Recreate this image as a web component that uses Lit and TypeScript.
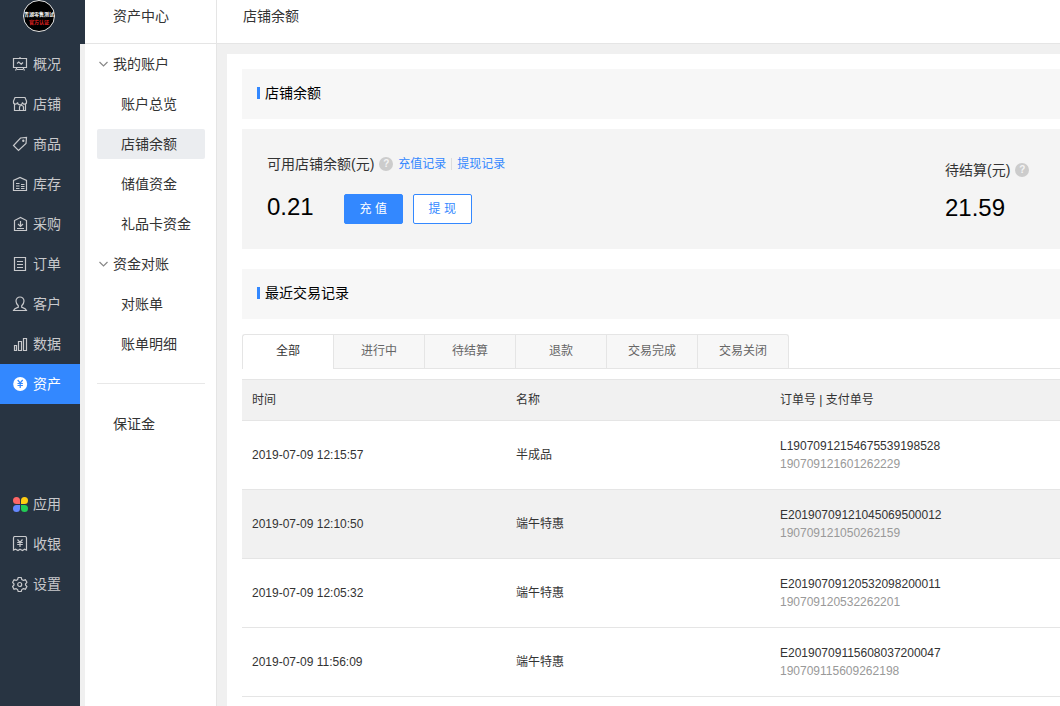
import { LitElement, html, svg, css } from "lit";
import { customElement, state } from "lit/decorators.js";
import { classMap } from "lit/directives/class-map.js";

const icons: Record<string, unknown> = {
  overview: svg`<path d="M1.500 2.500h13v9h-13zM8 1v1.500M5 11.500 3.500 14.500M11 11.500l1.500 3M5 13.500h6"/><path d="M5 7.500 6.800 6l2.400 2.200 1.800-1.700"/>`,
  shop: svg`<path d="M3 1.500h10l1.500 3.500v1a2 2 0 0 1-4 .3 2.500 2.500 0 0 1-5 0A2 2 0 0 1 1.500 6V5zM2.500 8v6.500h11V8"/><path d="M7.500 14.500v-3a2 2 0 0 1 4 0v3"/>`,
  goods: svg`<path d="M8.500 2 14.500 1.500 14 7.500 6.500 14.500 1.500 9.500z"/><circle cx="11.300" cy="4.800" r=".6"/>`,
  stock: svg`<path d="M1.500 14.500V4.500L8 1.500l6.500 3v10z"/><path d="M4 7.500h3.500M4 10h3.500M4 12.500h3.500M9 8.500h3.500M9 10.500h3.500M9 12.500h3.500"/>`,
  purchase: svg`<path d="M2.500 14.500v-10L8.500 1.500l6 3v10z"/><path d="M8.500 5v5M6 8l2.500 2.500L11 8M5 12.500h7"/>`,
  order: svg`<path d="M2.500 1.500h11v13h-11zM5 5.500h6M5 8.500h6M5 11.500h6"/>`,
  customer: svg`<path d="M8 1a4 4 0 0 0-4 4c0 2 .8 3.300 2.300 4.700v1.500c-2 .6-4 1-4.800 3.300h13c-.8-2.300-2.800-2.700-4.800-3.300V9.700C11.200 8.300 12 7 12 5a4 4 0 0 0-4-4z"/>`,
  data: svg`<path d="M2.500 9.500h2v5h-2zM6.500 5.500h3v9h-3zM11.500 2.500h3v12h-3z"/>`,
  asset: svg`<circle cx="8.200" cy="8" r="7" fill="#fff" stroke="none"/><path stroke="#3388ff" d="M5.700 4 8.200 7l2.500-3M5.500 7.500h5.400M5.500 9.500h5.400M8.200 7v5"/>`,
  apps: svg`<g stroke="none"><path fill="#ff6666" d="M8 8H4.500A3.500 3.500 0 1 1 8 4.500z"/><path fill="#ffcc11" d="M9 8V4.500A3.500 3.500 0 1 1 12.500 8z"/><path fill="#6688ff" d="M8 9v3.500A3.500 3.500 0 1 1 4.500 9z"/><path fill="#22cc55" d="M9 9h3.500A3.500 3.500 0 1 1 9 12.500z"/></g>`,
  cashier: svg`<path d="M3 .5h10c1 0 1.500.5 1.500 1.500v12l-2-.800-2 1.300L8 13.200 6 14.500l-2.500-1.300-2 .8V2C1.500 1 2 .5 3 .5z"/><path d="M5.500 3.500 8 6.300l2.500-2.800M5.200 6.500h5.600M5.200 8.500h5.600M8 6.500V11"/>`,
  settings: svg`<path d="M6.200 1.500h3l.6 2 1.500.9 2.100-.6 1.500 2.500L13.500 8v1l1.400 1.600-1.500 2.600-2.100-.5-1.500.9-.6 1.900h-3l-.6-1.900-1.500-.9-2.100.5L.6 10.600 2 9V8L.6 6.300 2.100 3.800l2.100.6 1.400-.9z"/><circle cx="7.700" cy="8.500" r="2"/>`,
};

interface NavItem {
  icon: string;
  label: string;
}

const PRIMARY: NavItem[] = [
  { icon: "overview", label: "概况" },
  { icon: "shop", label: "店铺" },
  { icon: "goods", label: "商品" },
  { icon: "stock", label: "库存" },
  { icon: "purchase", label: "采购" },
  { icon: "order", label: "订单" },
  { icon: "customer", label: "客户" },
  { icon: "data", label: "数据" },
  { icon: "asset", label: "资产" },
];

const SECONDARY: NavItem[] = [
  { icon: "apps", label: "应用" },
  { icon: "cashier", label: "收银" },
  { icon: "settings", label: "设置" },
];

const GROUPS = [
  { title: "我的账户", items: ["账户总览", "店铺余额", "储值资金", "礼品卡资金"] },
  { title: "资金对账", items: ["对账单", "账单明细"] },
];

const TABS = ["全部", "进行中", "待结算", "退款", "交易完成", "交易关闭"];

const ROWS = [
  { time: "2019-07-09 12:15:57", name: "半成品", order: "L19070912154675539198528", pay: "190709121601262229" },
  { time: "2019-07-09 12:10:50", name: "端午特惠", order: "E20190709121045069500012", pay: "190709121050262159", shaded: true },
  { time: "2019-07-09 12:05:32", name: "端午特惠", order: "E20190709120532098200011", pay: "190709120532262201" },
  { time: "2019-07-09 11:56:09", name: "端午特惠", order: "E20190709115608037200047", pay: "190709115609262198" },
];

@customElement("nav-rail")
export class NavRail extends LitElement {
  static styles = css`
    :host {
      display: block;
      background: #283442;
    }
    .secondary {
      margin-top: 80px;
    }
    .item {
      display: flex;
      align-items: center;
      gap: 5px;
      height: 40px;
      padding-left: 12px;
      font-size: 14px;
      line-height: 20px;
      color: #c8c9cc;
      text-decoration: none;
    }
    .item.active {
      background: #3388ff;
      color: #fff;
    }
    .icon {
      width: 16px;
      height: 16px;
      fill: none;
      stroke: currentColor;
      stroke-width: 1.2;
    }
  `;

  private item({ icon, label }: NavItem) {
    return html`<a class=${classMap({ item: true, active: label === "资产" })} href="#">
      <svg class="icon" viewBox="0 0 16 16" aria-hidden="true">${icons[icon]}</svg><span>${label}</span>
    </a>`;
  }

  render() {
    return html`
      <nav>${PRIMARY.map((i) => this.item(i))}</nav>
      <nav class="secondary">${SECONDARY.map((i) => this.item(i))}</nav>
    `;
  }
}

@customElement("side-menu")
export class SideMenu extends LitElement {
  static styles = css`
    :host {
      display: block;
      background: #fff;
      border-right: 1px solid #e5e5e5;
      padding: 0 11px 0 12px;
      font-size: 14px;
    }
    .menu,
    .row {
      display: flow-root;
    }
    .group,
    .link {
      box-sizing: border-box;
      display: flex;
      align-items: center;
      height: 30px;
      margin: 5px 0;
      padding: 0;
      border-radius: 2px;
      color: #333;
      line-height: 20px;
      text-decoration: none;
      white-space: nowrap;
    }
    .group {
      width: 100%;
      gap: 4px;
      border: 0;
      background: none;
      font-family: inherit;
      font-size: 14px;
    }
    .chevron {
      width: 12px;
      height: 12px;
      fill: none;
      stroke: #888;
      stroke-width: 1.2;
    }
    .link {
      padding-left: 24px;
    }
    .link.top {
      padding-left: 16px;
    }
    .link.active {
      background: #ebedf0;
    }
    .divider {
      height: 1px;
      margin: 19px 0 20px;
      border: 0;
      background: #e8e8e8;
    }
  `;

  render() {
    return html`<nav class="menu">
      ${GROUPS.map(
        (g) => html`
          <div class="row">
            <button class="group" type="button" aria-expanded="true">
              <svg class="chevron" viewBox="0 0 12 12" aria-hidden="true"><path d="M2.500 4 6.500 8 10.500 4" /></svg>${g.title}
            </button>
          </div>
          ${g.items.map(
            (t) => html`<div class="row"><a class=${classMap({ link: true, active: t === "店铺余额" })} href="#">${t}</a></div>`,
          )}
        `,
      )}
      <hr class="divider" />
      <div class="row"><a class="link top" href="#">保证金</a></div>
    </nav>`;
  }
}

@customElement("balance-card")
export class BalanceCard extends LitElement {
  static styles = css`
    :host {
      display: flex;
      justify-content: space-between;
      padding: 25px 0 25px 25px;
      margin: 10px 0 20px;
      background: #f4f4f4;
    }
    .label {
      display: flex;
      align-items: center;
      height: 20px;
      font-size: 14px;
      line-height: 20px;
      color: #333;
      white-space: nowrap;
    }
    .help {
      width: 14px;
      height: 14px;
      margin: 0 5px;
      padding: 0;
      border: 0;
      border-radius: 50%;
      background: #ccc;
      color: #f4f4f4;
      font: bold 10px/14px "Liberation Sans", sans-serif;
    }
    .record {
      font-size: 12px;
      color: #3388ff;
      text-decoration: none;
    }
    .record + .record {
      margin-left: 5px;
      padding-left: 6px;
      background: linear-gradient(#ddd, #ddd) left center / 1px 12px no-repeat;
    }
    .line {
      display: flex;
      gap: 10px;
      margin-top: 20px;
    }
    .amount {
      margin-right: 20px;
      font-size: 24px;
      line-height: 26px;
      color: #000;
    }
    .button {
      box-sizing: border-box;
      width: 59px;
      height: 30px;
      padding: 0;
      border: 1px solid #3388ff;
      border-radius: 2px;
      background: #fff;
      color: #3388ff;
      font-family: inherit;
      font-size: 12px;
      line-height: 20px;
    }
    .button.primary {
      background: #3388ff;
      color: #fff;
    }
    .pending {
      width: 115px;
      padding-top: 6px;
    }
    .pending .amount {
      margin-top: 15px;
    }
  `;

  render() {
    return html`
      <div>
        <div class="label">
          <span>可用店铺余额(元)</span><button class="help" type="button" aria-label="说明">?</button>
          <a class="record" href="#">充值记录</a><a class="record" href="#">提现记录</a>
        </div>
        <div class="line">
          <span class="amount">0.21</span>
          <button class="button primary" type="button">充 值</button>
          <button class="button" type="button">提 现</button>
        </div>
      </div>
      <div class="pending">
        <div class="label"><span>待结算(元)</span><button class="help" type="button" aria-label="说明">?</button></div>
        <div class="amount">21.59</div>
      </div>
    `;
  }
}

@customElement("trade-records")
export class TradeRecords extends LitElement {
  @state() private tab = 0;

  static styles = css`
    :host {
      display: block;
      font-size: 12px;
      color: #333;
    }
    .tabs {
      display: flex;
      margin: 15px 0 10px;
      border-bottom: 1px solid #e5e5e5;
    }
    .tab {
      box-sizing: border-box;
      width: 91px;
      height: 34px;
      padding: 0 0 2px;
      border: solid #e5e5e5;
      border-width: 1px 0 0 1px;
      background: #f7f7f7;
      color: #666;
      font-family: inherit;
      font-size: 12px;
      line-height: 20px;
    }
    .tab:first-child {
      border-top-left-radius: 3px;
    }
    .tab:last-child {
      width: 92px;
      border-right-width: 1px;
      border-top-right-radius: 3px;
    }
    .tab.active {
      height: 35px;
      margin-bottom: -1px;
      padding-bottom: 3px;
      background: #fff;
      color: #333;
    }
    .records {
      width: 100%;
      border-collapse: separate;
      border-spacing: 0;
      table-layout: fixed;
      line-height: 18px;
    }
    .col {
      width: 264px;
    }
    .head,
    .cell {
      padding: 0 10px;
      border-bottom: 1px solid #e5e5e5;
      font-weight: normal;
      text-align: left;
      white-space: nowrap;
    }
    .head {
      height: 40px;
      border-top: 1px solid #e5e5e5;
      background: #f1f1f1;
    }
    .cell {
      height: 68px;
    }
    .shaded {
      background: #f1f1f1;
    }
    .pay {
      color: #999;
    }
  `;

  render() {
    return html`
      <div class="tabs" role="tablist">
        ${TABS.map(
          (t, i) => html`<button
            class=${classMap({ tab: true, active: i === this.tab })}
            type="button"
            role="tab"
            aria-selected=${i === this.tab ? "true" : "false"}
            @click=${() => (this.tab = i)}
          >${t}</button>`,
        )}
      </div>
      <table class="records">
        <colgroup><col class="col" /><col class="col" /><col /></colgroup>
        <thead>
          <tr><th class="head">时间</th><th class="head">名称</th><th class="head">订单号 | 支付单号</th></tr>
        </thead>
        <tbody>
          ${ROWS.map(
            (r) => html`<tr class=${classMap({ shaded: !!r.shaded })}>
              <td class="cell">${r.time}</td>
              <td class="cell">${r.name}</td>
              <td class="cell"><div>${r.order}</div><div class="pay">${r.pay}</div></td>
            </tr>`,
          )}
        </tbody>
      </table>
    `;
  }
}

@customElement("app-root")
export class AppRoot extends LitElement {
  static styles = css`
    :host {
      display: flex;
      flex-direction: column;
      min-height: 100vh;
      background: #f0f0f0;
      font-family: "Liberation Sans", "Noto Sans CJK SC", sans-serif;
      color: #333;
    }
    .header {
      display: flex;
      height: 44px;
      font-size: 14px;
      line-height: 32px;
    }
    .brand {
      box-sizing: border-box;
      width: 85px;
      padding-left: 23px;
      background: #283442;
    }
    .logo {
      display: block;
      width: 32px;
      height: 32px;
      font-weight: bold;
    }
    .section,
    .crumb {
      box-sizing: border-box;
      margin: 0;
      border-bottom: 1px solid #e5e5e5;
      background: #fff;
      font-size: 14px;
      font-weight: normal;
    }
    .section {
      width: 132px;
      padding-left: 28px;
      border-right: 1px solid #e5e5e5;
    }
    .crumb {
      flex: 1;
      padding-left: 26px;
    }
    .body {
      display: flex;
      flex: 1;
    }
    .rail {
      width: 80px;
      margin-right: 5px;
    }
    .side {
      width: 108px;
    }
    .panel {
      flex: 1;
      min-width: 0;
      margin: 10px 0 0 10px;
      padding: 15px 0 0 15px;
      background: #fff;
    }
    .title {
      box-sizing: border-box;
      display: flex;
      align-items: center;
      gap: 5px;
      height: 50px;
      margin: 0;
      padding: 0 0 2px 15px;
      background: #f7f7f7;
      color: #000;
      font-size: 14px;
      font-weight: normal;
      line-height: 20px;
    }
    .title::before {
      content: "";
      width: 3px;
      height: 12px;
      background: #3388ff;
    }
  `;

  render() {
    return html`
      <header class="header">
        <div class="brand">
          <svg class="logo" viewBox="0 0 32 32" role="img" aria-label="店铺标志">
            <circle cx="16" cy="16" r="15.500" fill="#000" stroke="#e8e8e8" />
            <text x="16" y="15.500" text-anchor="middle" font-size="5" fill="#fff">青湖零售测试</text>
            <text x="16" y="23.500" text-anchor="middle" font-size="5" fill="#e02020">官方认证</text>
          </svg>
        </div>
        <h1 class="section">资产中心</h1>
        <div class="crumb">店铺余额</div>
      </header>
      <div class="body">
        <nav-rail class="rail"></nav-rail>
        <side-menu class="side"></side-menu>
        <main class="panel">
          <h2 class="title">店铺余额</h2>
          <balance-card></balance-card>
          <h2 class="title">最近交易记录</h2>
          <trade-records></trade-records>
        </main>
      </div>
    `;
  }
}
